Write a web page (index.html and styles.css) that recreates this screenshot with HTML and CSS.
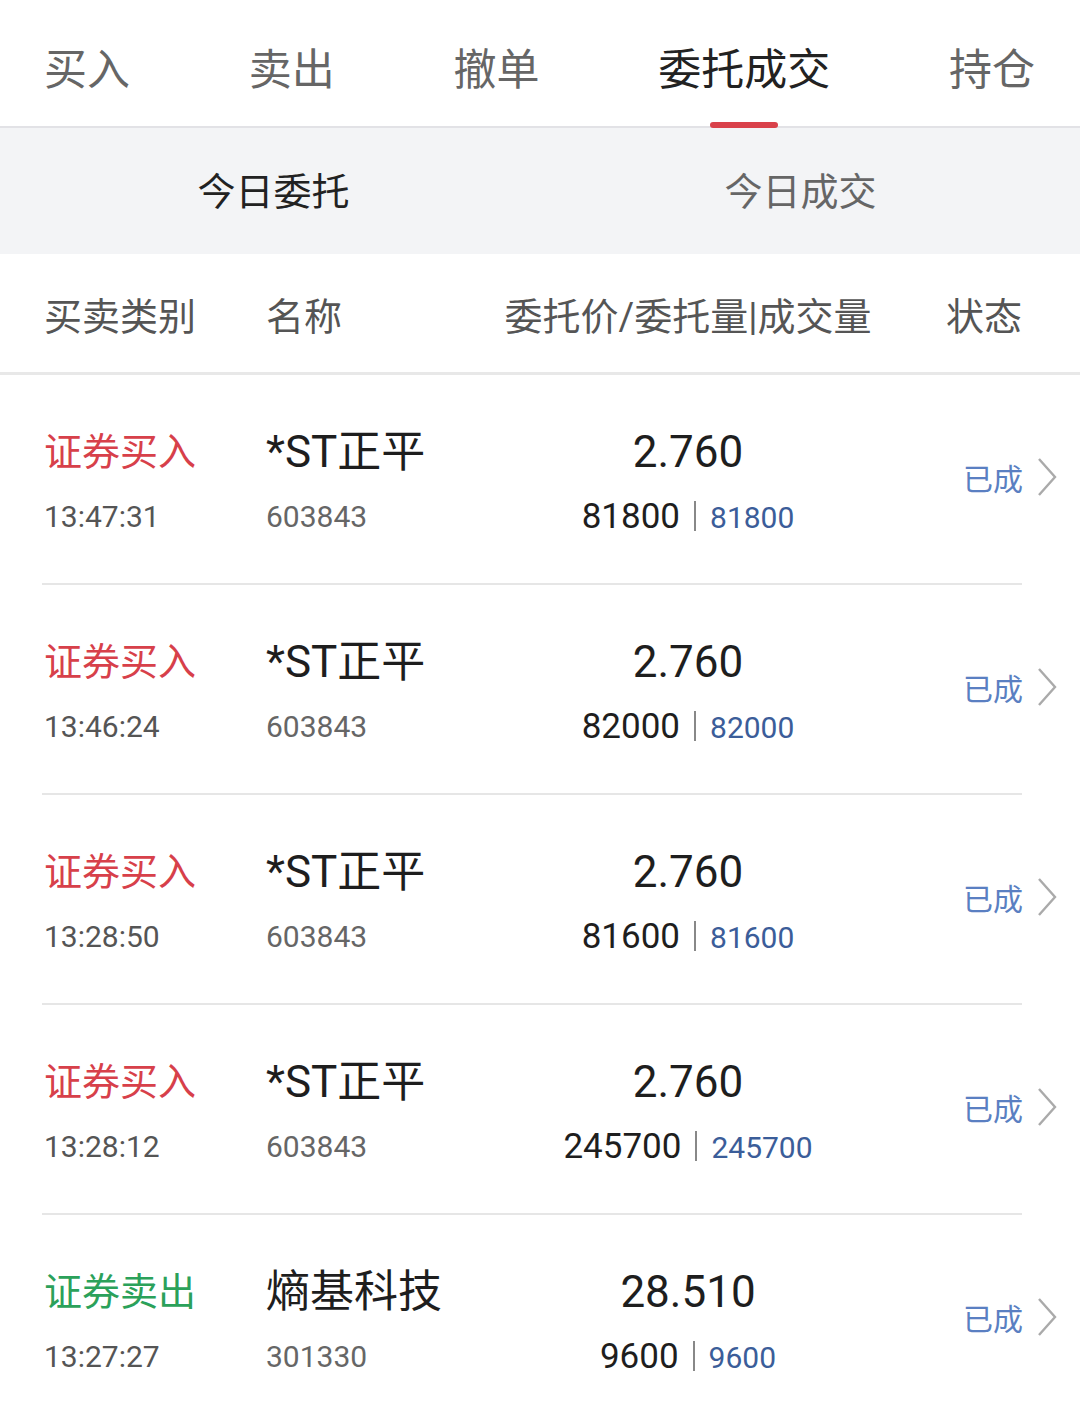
FILE: index.html
```html
<html>
  <head>
    <meta name="viewport" content="width=device-width, initial-scale=1">
    <link rel="stylesheet" href="styles.css">
  </head>
  <body>
    <div class="tabs">
      <div class="tab">买入</div>
      <div class="tab">卖出</div>
      <div class="tab">撤单</div>
      <div class="tab active">委托成交<div class="bar"></div></div>
      <div class="tab">持仓</div>
    </div>
    <div class="subtabs">
      <div class="subtab on">今日委托</div>
      <div class="subtab">今日成交</div>
    </div>
    <div class="head">
      <div>买卖类别</div>
      <div>名称</div>
      <div class="mid">委托价/委托量|成交量</div>
      <div class="st">状态</div>
    </div>
    <div class="list">
      <div class="row">
        <div class="cell"><div class="type buy">证券买入</div><div class="sub">13:47:31</div></div>
        <div class="cell"><div class="name">*ST正平</div><div class="sub code">603843</div></div>
        <div class="cell mid"><div class="price">2.760</div><div class="qty">81800<span class="sep"></span><span class="done">81800</span></div></div>
        <div class="status">已成<svg width="22" height="42" viewBox="0 0 22 42"><polyline points="3,3 19,21 3,39" fill="none" stroke="#aaaaaa" stroke-width="2.4"/></svg></div>
      </div>
      <div class="row">
        <div class="cell"><div class="type buy">证券买入</div><div class="sub">13:46:24</div></div>
        <div class="cell"><div class="name">*ST正平</div><div class="sub code">603843</div></div>
        <div class="cell mid"><div class="price">2.760</div><div class="qty">82000<span class="sep"></span><span class="done">82000</span></div></div>
        <div class="status">已成<svg width="22" height="42" viewBox="0 0 22 42"><polyline points="3,3 19,21 3,39" fill="none" stroke="#aaaaaa" stroke-width="2.4"/></svg></div>
      </div>
      <div class="row">
        <div class="cell"><div class="type buy">证券买入</div><div class="sub">13:28:50</div></div>
        <div class="cell"><div class="name">*ST正平</div><div class="sub code">603843</div></div>
        <div class="cell mid"><div class="price">2.760</div><div class="qty">81600<span class="sep"></span><span class="done">81600</span></div></div>
        <div class="status">已成<svg width="22" height="42" viewBox="0 0 22 42"><polyline points="3,3 19,21 3,39" fill="none" stroke="#aaaaaa" stroke-width="2.4"/></svg></div>
      </div>
      <div class="row">
        <div class="cell"><div class="type buy">证券买入</div><div class="sub">13:28:12</div></div>
        <div class="cell"><div class="name">*ST正平</div><div class="sub code">603843</div></div>
        <div class="cell mid"><div class="price">2.760</div><div class="qty">245700<span class="sep"></span><span class="done">245700</span></div></div>
        <div class="status">已成<svg width="22" height="42" viewBox="0 0 22 42"><polyline points="3,3 19,21 3,39" fill="none" stroke="#aaaaaa" stroke-width="2.4"/></svg></div>
      </div>
      <div class="row">
        <div class="cell"><div class="type sell">证券卖出</div><div class="sub">13:27:27</div></div>
        <div class="cell"><div class="name">熵基科技</div><div class="sub code">301330</div></div>
        <div class="cell mid"><div class="price">28.510</div><div class="qty">9600<span class="sep"></span><span class="done">9600</span></div></div>
        <div class="status">已成<svg width="22" height="42" viewBox="0 0 22 42"><polyline points="3,3 19,21 3,39" fill="none" stroke="#aaaaaa" stroke-width="2.4"/></svg></div>
      </div>
    </div>
  </body>
</html>
```
FILE: styles.css
```css
body {
  margin: 0;
  background: white;
  font-family: Roboto, "Noto Sans CJK SC", sans-serif;
  color: #222;
  overflow: hidden;
}

.tabs {
  display: flex;
  justify-content: space-between;
  align-items: flex-start;
  height: 126px;
  padding: 0 45px 0 44px;
  border-bottom: 2px solid #e2e2e6;
}
.tab {
  display: flex;
  flex-direction: column;
  align-items: center;
  padding-top: 40px;
  font-size: 43px;
  line-height: 60px;
  color: #666;
}
.tab.active {
  color: #222;
}
.tab .bar {
  width: 68px;
  height: 6px;
  margin-top: 22px;
  border-radius: 3px;
  background: #d9414a;
}

.subtabs {
  display: flex;
  height: 126px;
  background: #f3f4f6;
}
.subtab {
  flex: 1;
  display: flex;
  align-items: center;
  justify-content: center;
  padding-bottom: 6px;
  font-size: 38px;
  color: #666;
}
.subtab.on {
  color: #222;
  padding-left: 10px;
}
.subtab:last-child {
  padding-right: 16px;
}

.head {
  display: grid;
  grid-template-columns: 222px 200px 444px minmax(0, 1fr);
  align-items: center;
  height: 118px;
  padding-left: 44px;
  border-bottom: 3px solid #e8e8e8;
  font-size: 38px;
  color: #555;
}
.head .mid {
  text-align: center;
}
.head .st {
  padding-left: 36px;
}

.row {
  display: grid;
  grid-template-columns: 222px 200px 444px minmax(0, 1fr);
  margin: 0 58px 0 42px;
  padding: 49px 0 44px 2px;
  border-bottom: 2px solid #e6e6e6;
}
.cell .type,
.cell .name,
.cell .price {
  height: 56px;
  line-height: 56px;
  margin-bottom: 15px;
  white-space: nowrap;
}
.type {
  font-size: 38px;
}
.buy {
  color: #d7404a;
}
.sell {
  color: #2ba15a;
}
.name {
  font-size: 44px;
  color: #1e1e1e;
}
.price {
  font-size: 44px;
  color: #1e1e1e;
}
.sub {
  height: 44px;
  line-height: 44px;
  font-size: 30px;
  color: #555;
}
.code {
  color: #666;
}
.mid {
  text-align: center;
}
.qty {
  height: 44px;
  line-height: 44px;
  font-size: 35px;
  color: #1e1e1e;
  white-space: nowrap;
}
.sep {
  display: inline-block;
  width: 2px;
  height: 30px;
  margin: 0 14px 0 14px;
  background: #888;
  vertical-align: -3px;
}
.done {
  font-size: 30px;
  color: #3b5d99;
}
.status {
  display: flex;
  align-items: center;
  align-self: center;
  padding: 0 0 10px 53px;
  font-size: 30px;
  color: #5a7fc2;
  white-space: nowrap;
}
.status svg {
  margin-left: 13px;
  flex-shrink: 0;
}
```
